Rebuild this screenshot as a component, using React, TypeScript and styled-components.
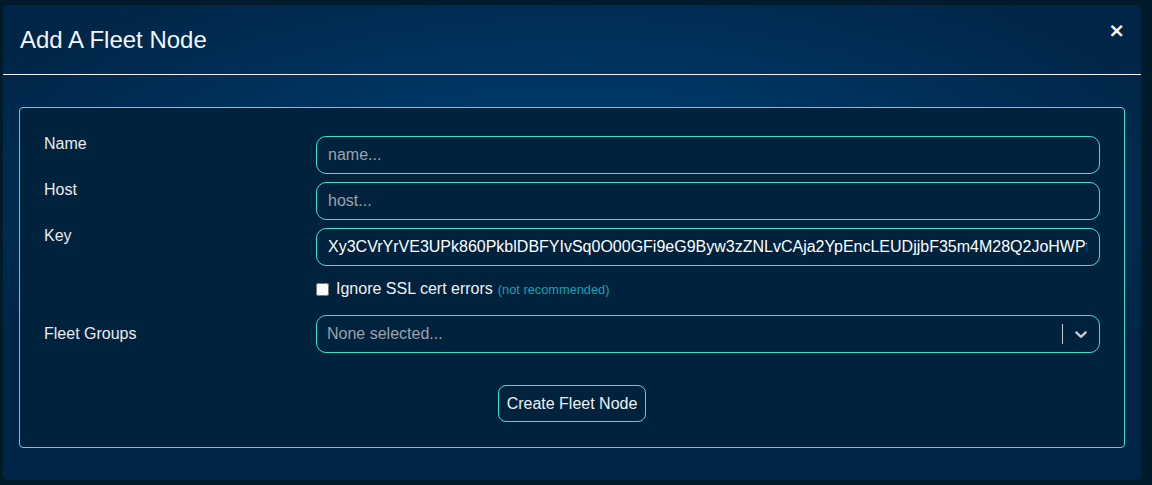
import React from "react";
import styled, { createGlobalStyle } from "styled-components";

const GlobalStyle = createGlobalStyle`
  html, body {
    margin: 0;
    padding: 0;
    background: #011a2c;
    font-family: "Liberation Sans", Arial, sans-serif;
  }
  * { box-sizing: border-box; }
`;

const Page = styled.div`
  padding: 5px 11px 5px 3px;
  width: 1152px;
  height: 485px;
`;

const Modal = styled.div`
  width: 1138px;
  height: 475px;
  border-radius: 5px;
  overflow: hidden;
  background: radial-gradient(ellipse 60% 55% at 50% 40%, #00467c 0%, #003561 45%, #002546 100%);
  display: flex;
  flex-direction: column;
`;

const Header = styled.div`
  height: 70px;
  flex-shrink: 0;
  border-bottom: 1px solid #f2f2f2;
  display: flex;
  justify-content: space-between;
  align-items: flex-start;
  padding: 0 16px 0 17px;
`;

const Title = styled.h2`
  margin: 22px 0 0;
  font-size: 24px;
  font-weight: 400;
  line-height: 26px;
  color: #f4f6f8;
`;

const Close = styled.button`
  background: none;
  border: none;
  color: #ffffff;
  font-family: "DejaVu Sans", sans-serif;
  font-weight: 700;
  font-size: 20px;
  line-height: 20px;
  padding: 0;
  margin-top: 15px;
  cursor: pointer;
`;

const Body = styled.div`
  padding: 32px 16px;
  flex: 1;
  display: flex;
`;

const Card = styled.form`
  flex: 1;
  border: 1px solid #40e0d0;
  border-radius: 4px;
  background: #00223d;
  padding: 28px 24px 24px 24px;
  display: flex;
  flex-direction: column;
`;

const Row = styled.div<{ $mt?: number }>`
  display: grid;
  grid-template-columns: 272px 1fr;
  margin-top: ${(p) => p.$mt ?? 0}px;
`;

const Label = styled.label<{ $pt?: number }>`
  color: #e8ecef;
  font-size: 16px;
  line-height: 16px;
  padding-top: ${(p) => p.$pt ?? 0}px;
`;

const Input = styled.input`
  height: 38px;
  width: 100%;
  border: 1px solid #40e0d0;
  border-radius: 10px;
  background: transparent;
  color: #ffffff;
  font-family: "Liberation Sans", Arial, sans-serif;
  font-size: 16px;
  padding: 0 12px 0 11px;
  outline: none;
  &::placeholder {
    color: #9aa3aa;
  }
`;

const CheckRow = styled.label`
  display: flex;
  align-items: center;
  color: #eef1f3;
  font-size: 16px;
  line-height: 18px;
`;

const Check = styled.input`
  width: 13px;
  height: 13px;
  margin: 0 7px 0 0;
`;

const CheckText = styled.span`
  line-height: 18px;
`;

const Muted = styled.span`
  color: #1b9fb3;
  font-size: 12.8px;
  margin-left: 5px;
`;

const Select = styled.div`
  height: 38px;
  border: 1px solid #40e0d0;
  border-radius: 10px;
  display: flex;
  align-items: center;
  padding-left: 10px;
  color: #9aa3aa;
  font-size: 16px;
`;

const SelectText = styled.span`
  flex: 1;
`;

const Separator = styled.span`
  width: 1px;
  height: 20px;
  background: #c8ccd0;
`;

const Chevron = styled.span`
  width: 36px;
  display: flex;
  justify-content: center;
  align-items: center;
`;

const Actions = styled.div`
  display: flex;
  justify-content: center;
  margin-top: 32px;
`;

const Button = styled.button`
  height: 37px;
  padding: 0 8px;
  border: 1px solid #40e0d0;
  border-radius: 8px;
  background: transparent;
  color: #eef1f3;
  font-family: "Liberation Sans", Arial, sans-serif;
  font-size: 16px;
  cursor: pointer;
`;

const KEY =
  "Xy3CVrYrVE3UPk860PkblDBFYIvSq0O00GFi9eG9Byw3zZNLvCAja2YpEncLEUDjjbF35m4M28Q2JoHWPtR7qZ";

export default function App() {
  return (
    <>
      <GlobalStyle />
      <Page>
        <Modal>
          <Header>
            <Title>Add A Fleet Node</Title>
            <Close type="button" aria-label="Close">×</Close>
          </Header>
          <Body>
            <Card onSubmit={(e) => e.preventDefault()}>
              <Row>
                <Label>Name</Label>
                <Input placeholder="name..." />
              </Row>
              <Row $mt={8}>
                <Label>Host</Label>
                <Input placeholder="host..." />
              </Row>
              <Row $mt={8}>
                <Label>Key</Label>
                <Input defaultValue={KEY} />
              </Row>
              <Row $mt={14}>
                <span />
                <CheckRow>
                  <Check type="checkbox" />
                  <CheckText>
                    Ignore SSL cert errors
                    <Muted>(not recommended)</Muted>
                  </CheckText>
                </CheckRow>
              </Row>
              <Row $mt={16}>
                <Label $pt={11}>Fleet Groups</Label>
                <Select>
                  <SelectText>None selected...</SelectText>
                  <Separator />
                  <Chevron>
                    <svg width="20" height="20" viewBox="0 0 20 20" fill="#c8ccd0">
                      <path d="M4.516 7.548c0.436-0.446 1.043-0.481 1.576 0l3.908 3.747 3.908-3.747c0.533-0.481 1.141-0.446 1.574 0 0.436 0.445 0.408 1.197 0 1.615-0.406 0.418-4.695 4.502-4.695 4.502-0.217 0.223-0.502 0.335-0.787 0.335s-0.57-0.112-0.789-0.335c0 0-4.287-4.084-4.695-4.502s-0.436-1.17 0-1.615z" />
                    </svg>
                  </Chevron>
                </Select>
              </Row>
              <Actions>
                <Button type="submit">Create Fleet Node</Button>
              </Actions>
            </Card>
          </Body>
        </Modal>
      </Page>
    </>
  );
}
